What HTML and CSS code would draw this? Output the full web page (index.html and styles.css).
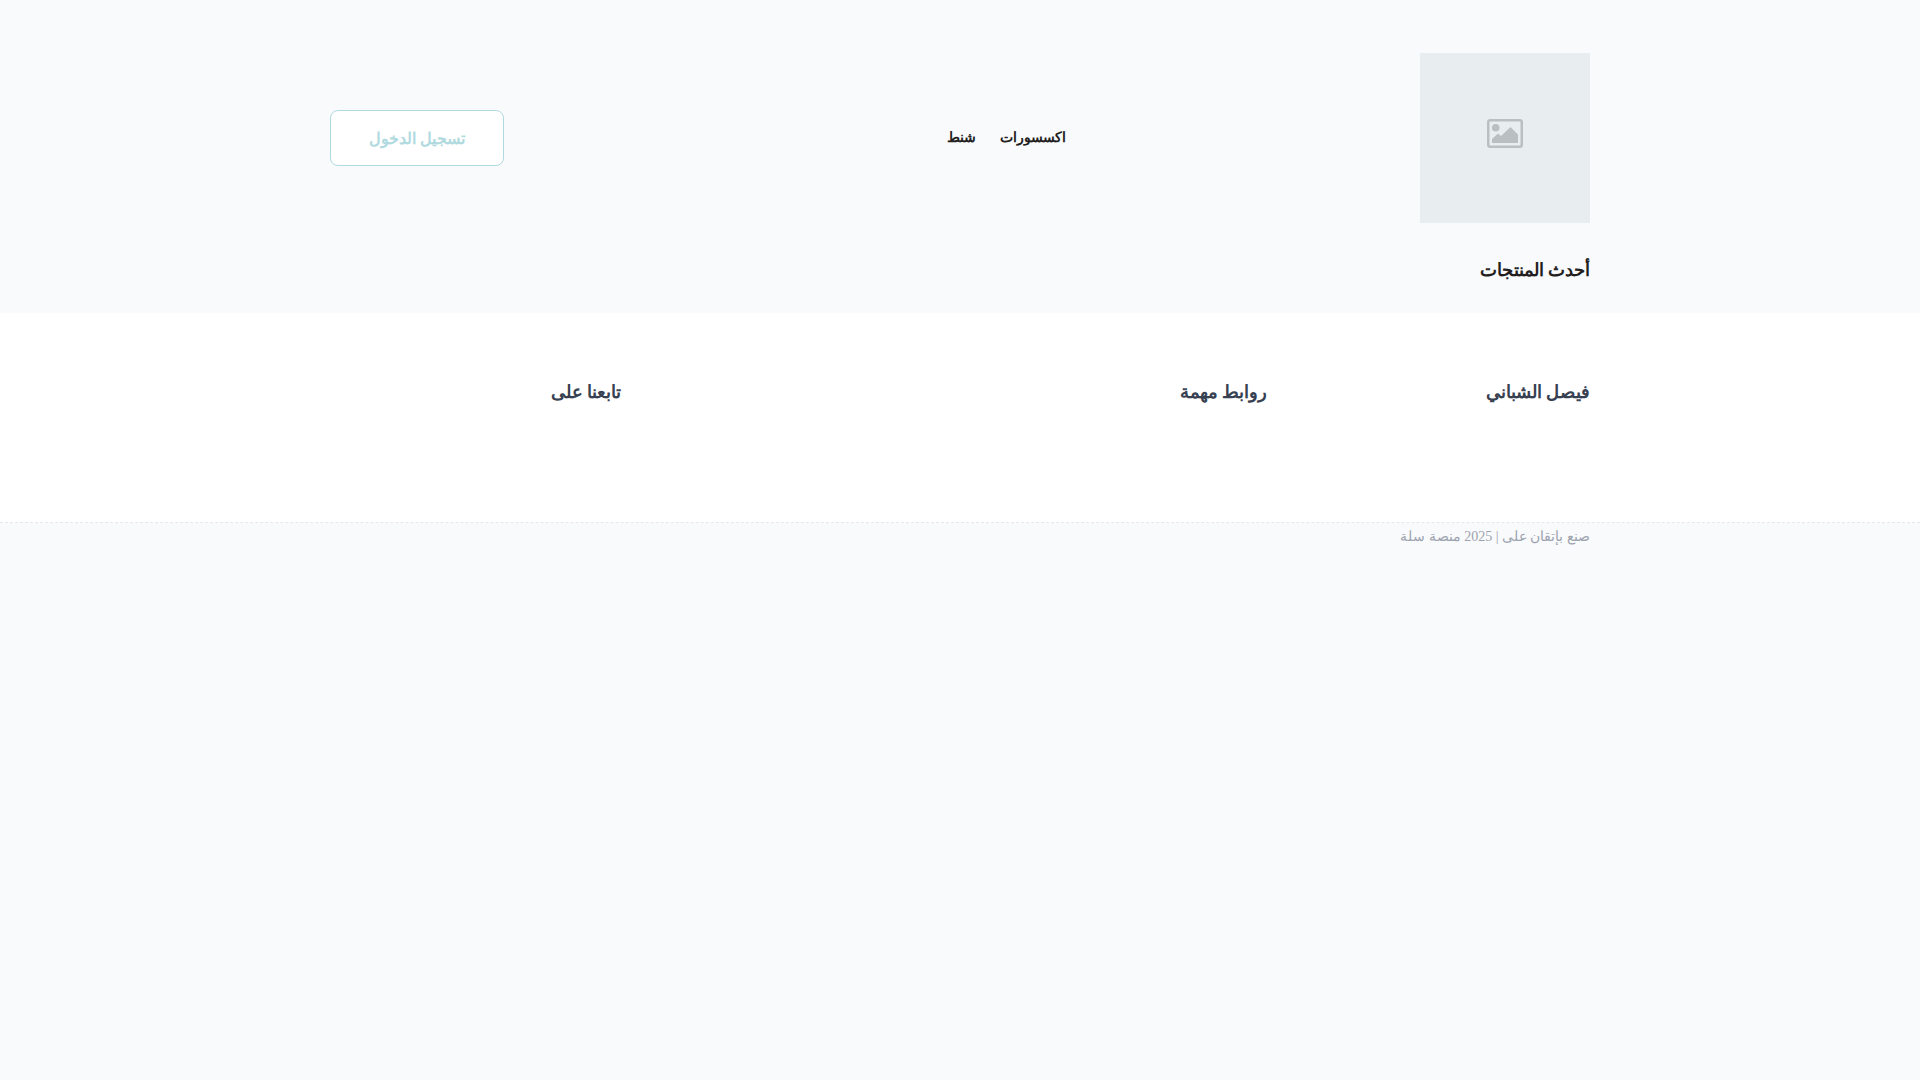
FILE: index.html
```html
<!DOCTYPE html>
<html lang="ar" dir="rtl">
<head>
<meta charset="UTF-8">
<meta name="viewport" content="width=device-width, initial-scale=1.0">
<title>فيصل الشباني</title>
<link rel="stylesheet" href="styles.css">
</head>
<body>

<!-- header -->
<header class="container header">
  <a class="logo" href="#" aria-label="فيصل الشباني">
    <svg viewBox="0 0 36 29" width="36" height="29" aria-hidden="true">
      <rect x="1.250" y="1.250" width="33.500" height="26.500" rx="2" fill="none" stroke="currentColor" stroke-width="2.500"/>
      <circle cx="8.700" cy="8.700" r="3.800" fill="currentColor"/>
      <path d="M5 24v-4l6-5.600 3 2.700 9.500-9 7.500 7.300V24z" fill="currentColor"/>
    </svg>
  </a>
  <nav class="menu">
    <a href="#">اكسسورات</a>
    <a href="#">شنط</a>
  </nav>
  <button class="btn-login" type="button">تسجيل الدخول</button>
</header>

<!-- latest products -->
<main class="container">
  <h2 class="section-title">أحدث المنتجات</h2>
</main>

<!-- footer -->
<footer>
  <div class="footer-top">
    <div class="container footer-grid">
      <h3>فيصل الشباني</h3>
      <h3 class="wide">روابط مهمة</h3>
      <h3>تابعنا على</h3>
    </div>
  </div>
  <div class="container">
    <p class="copyright">صنع بإتقان على | 2025 منصة سلة</p>
  </div>
</footer>

</body>
</html>
```
FILE: styles.css
```css
:root {
  --bg: #f9fafc;
  --white: #ffffff;
  --primary: #b0dae0;
  --text: #231f1e;
  --title: #374151;
  --muted: #9ca3af;
  --line: #e5e7eb;
}
* { margin: 0; padding: 0; box-sizing: border-box; }
body {
  background: var(--bg);
  color: var(--text);
  font-family: "Liberation Serif", serif;
}
a { color: inherit; text-decoration: none; }

.container {
  max-width: 1280px;
  margin: 0 auto;
  padding: 0 10px;
}

/* header */
.header {
  display: flex;
  align-items: center;
  justify-content: space-between;
  padding-top: 53px;
}
.logo {
  display: flex;
  align-items: center;
  justify-content: center;
  width: 170px;
  height: 170px;
  padding-bottom: 10px;
  background: #e8eef0;
  color: #babfc1;
}
.menu {
  display: flex;
  gap: 24px;
  padding-bottom: 2px;
  padding-inline-end: 88px;
  font-size: 14px;
  font-weight: 700;
}
.btn-login {
  height: 56px;
  padding: 0 38px;
  background: var(--white);
  border: 1px solid var(--primary);
  border-radius: 8px;
  color: var(--primary);
  font-family: inherit;
  font-size: 16px;
  font-weight: 700;
  cursor: pointer;
}

.section-title {
  padding: 33px 0 29px;
  font-size: 18px;
  line-height: 28px;
}

/* footer */
.footer-top {
  background: var(--white);
  border-bottom: 1px dashed var(--line);
}
.footer-grid {
  display: grid;
  grid-template-columns: repeat(4, 1fr);
  gap: 32px;
  padding-top: 65px;
  padding-bottom: 116px;
}
.footer-grid h3 {
  color: var(--title);
  font-size: 18px;
  line-height: 28px;
}
.footer-grid .wide { grid-column: span 2; }
.copyright {
  padding: 4px 0;
  color: var(--muted);
  font-size: 14px;
  line-height: 20px;
}
```
